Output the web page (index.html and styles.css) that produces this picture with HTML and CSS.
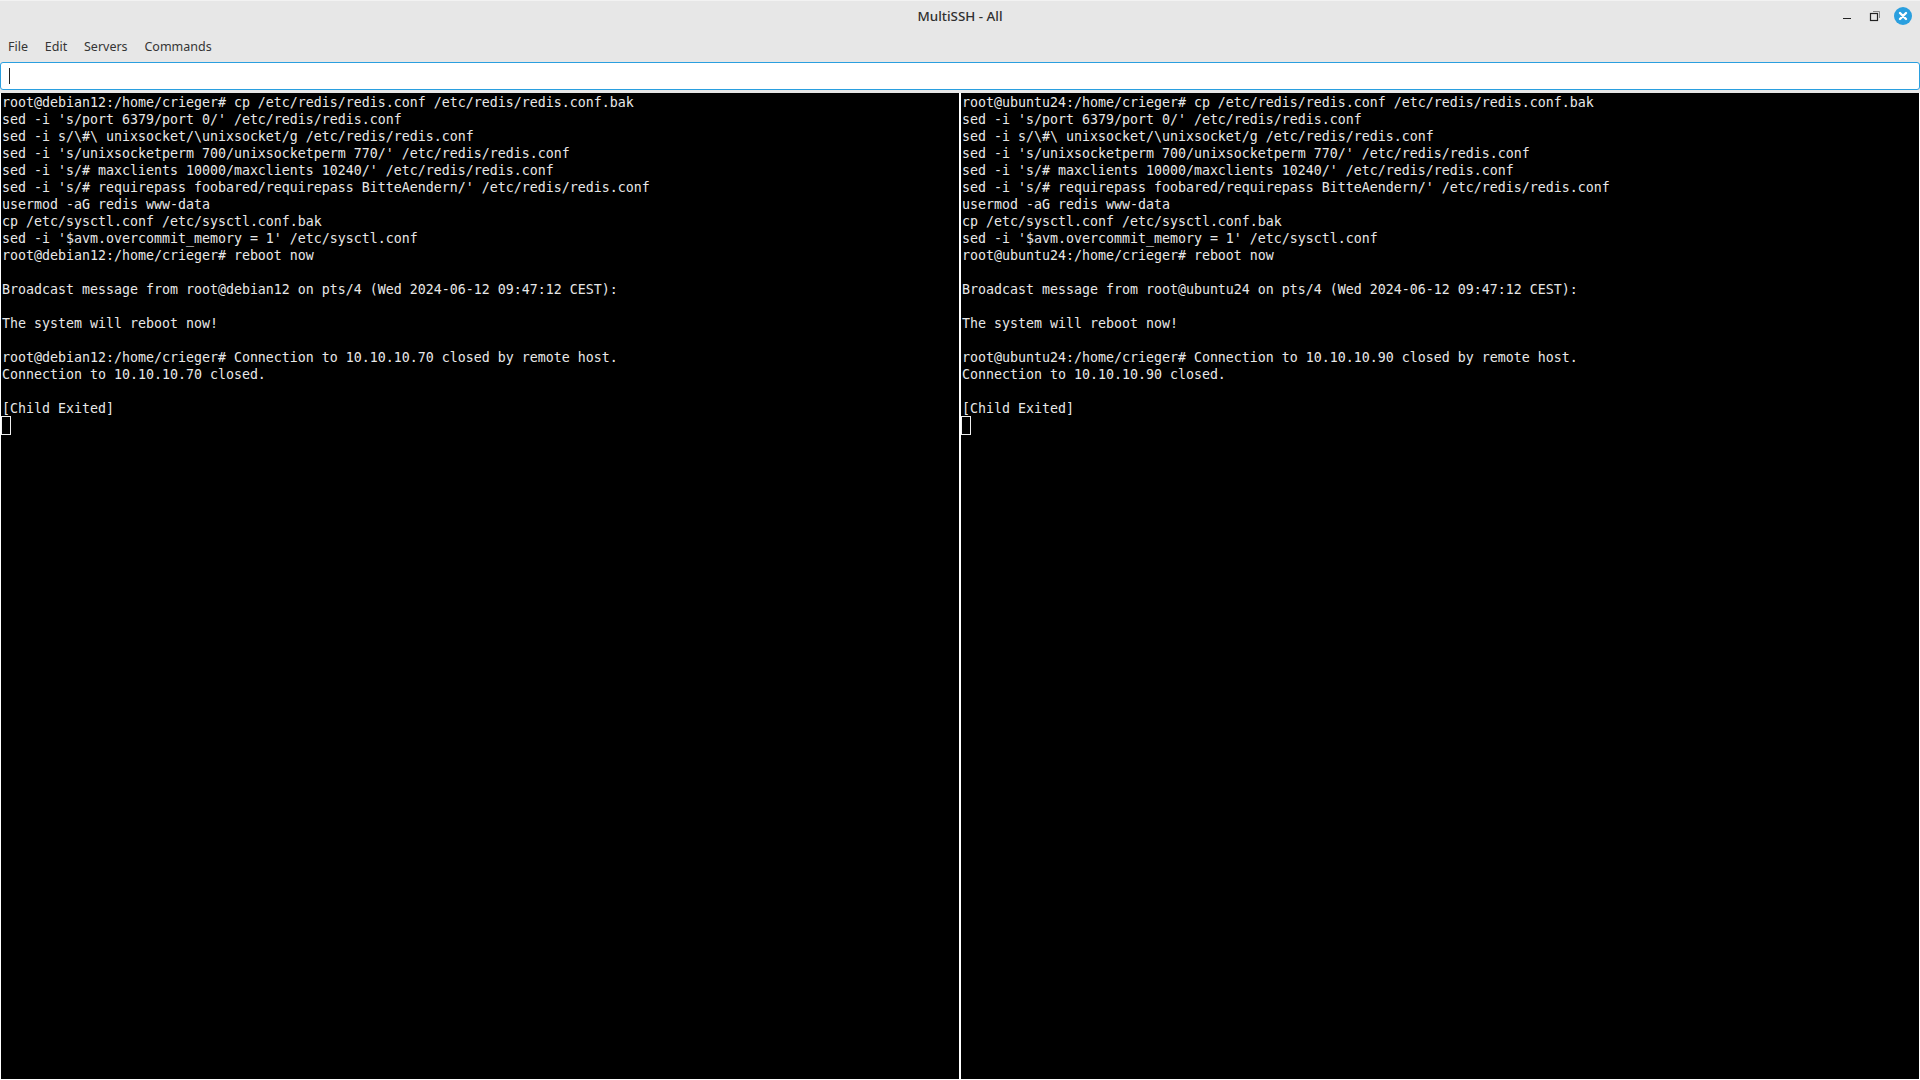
FILE: index.html
```html
<!DOCTYPE html>
<html lang="en">
<head>
<meta charset="utf-8">
<title>MultiSSH - All</title>
<link rel="stylesheet" href="styles.css">
</head>
<body>
<div class="window">
  <header class="titlebar">
    <div class="title">MultiSSH - All</div>
    <div class="controls">
      <svg class="ctl ctl-min" width="12" height="12" viewBox="0 0 12 12"><path d="M2 8.5h8" stroke="#222" stroke-width="1" fill="none"/></svg>
      <svg class="ctl" width="12" height="12" viewBox="0 0 12 12"><path d="M4 1.5h6.5V8" stroke="#888" stroke-width="1" fill="none"/><rect x="1.5" y="3.5" width="7" height="7" fill="none" stroke="#222" stroke-width="1.2"/></svg>
      <svg class="close" width="18" height="18" viewBox="0 0 18 18"><circle cx="9" cy="9" r="9" fill="#2a9fdf"/><path d="M6 6l6 6M12 6l-6 6" stroke="#fff" stroke-width="2.4" stroke-linecap="round"/></svg>
    </div>
  </header>
  <nav class="menubar">
    <span class="menu">File</span>
    <span class="menu">Edit</span>
    <span class="menu">Servers</span>
    <span class="menu">Commands</span>
  </nav>
  <div class="inputrow">
    <div class="input"><span class="caret"></span></div>
  </div>
  <main class="panes">
<section class="pane"><pre class="term">root@debian12:/home/crieger# cp /etc/redis/redis.conf /etc/redis/redis.conf.bak
sed -i 's/port 6379/port 0/' /etc/redis/redis.conf
sed -i s/\#\ unixsocket/\unixsocket/g /etc/redis/redis.conf
sed -i 's/unixsocketperm 700/unixsocketperm 770/' /etc/redis/redis.conf
sed -i 's/# maxclients 10000/maxclients 10240/' /etc/redis/redis.conf
sed -i 's/# requirepass foobared/requirepass BitteAendern/' /etc/redis/redis.conf
usermod -aG redis www-data
cp /etc/sysctl.conf /etc/sysctl.conf.bak
sed -i '$avm.overcommit_memory = 1' /etc/sysctl.conf
root@debian12:/home/crieger# reboot now

Broadcast message from root@debian12 on pts/4 (Wed 2024-06-12 09:47:12 CEST):

The system will reboot now!

root@debian12:/home/crieger# Connection to 10.10.10.70 closed by remote host.
Connection to 10.10.10.70 closed.

[Child Exited]
</pre><div class="cursor"></div></section>
<section class="pane"><pre class="term">root@ubuntu24:/home/crieger# cp /etc/redis/redis.conf /etc/redis/redis.conf.bak
sed -i 's/port 6379/port 0/' /etc/redis/redis.conf
sed -i s/\#\ unixsocket/\unixsocket/g /etc/redis/redis.conf
sed -i 's/unixsocketperm 700/unixsocketperm 770/' /etc/redis/redis.conf
sed -i 's/# maxclients 10000/maxclients 10240/' /etc/redis/redis.conf
sed -i 's/# requirepass foobared/requirepass BitteAendern/' /etc/redis/redis.conf
usermod -aG redis www-data
cp /etc/sysctl.conf /etc/sysctl.conf.bak
sed -i '$avm.overcommit_memory = 1' /etc/sysctl.conf
root@ubuntu24:/home/crieger# reboot now

Broadcast message from root@ubuntu24 on pts/4 (Wed 2024-06-12 09:47:12 CEST):

The system will reboot now!

root@ubuntu24:/home/crieger# Connection to 10.10.10.90 closed by remote host.
Connection to 10.10.10.90 closed.

[Child Exited]
</pre><div class="cursor"></div></section>
  </main>
</div>
</body>
</html>
```
FILE: styles.css
```css
html, body { margin: 0; padding: 0; height: 100%; overflow: hidden; }
.window {
  width: 1920px; height: 1080px; background: #e7e7e7;
  display: flex; flex-direction: column;
  font-family: "Noto Sans", sans-serif; color: #2f2f2f;
}
.titlebar {
  height: 32px; flex: none; position: relative;
  display: flex; align-items: center; justify-content: center;
  border-top: 1px solid #f2f2f2; box-sizing: border-box;
  padding-bottom: 2px;
}
.title { font-size: 13.4px; font-weight: 500; color: #303030; }
.controls {
  position: absolute; right: 8px; top: 6px;
  display: flex; align-items: center; gap: 13px;
}
.ctl { display: block; }
.ctl-min { margin-right: 3px; }
.close { display: block; }
.menubar {
  height: 28px; flex: none; display: flex; align-items: center;
  padding-left: 8px; gap: 16.8px; font-size: 12.5px;
  box-sizing: border-box;
}
.menu { color: #353535; }
.inputrow { flex: none; height: 33px; padding: 2px 0 0 0; box-sizing: border-box; background: #e7e7e7; }
.input {
  height: 28px; box-sizing: border-box;
  background: #fff; border: 1px solid #2a9fdf; border-radius: 3px;
  display: flex; align-items: center; padding-left: 8px;
}
.caret { width: 1px; height: 16px; background: #222; display: block; }
.panes { flex: 1; display: flex; gap: 2px; padding: 0 1px 1px 1px; background: #fff; min-height: 0; box-sizing: border-box; }
.pane { flex: 1; background: #000; min-width: 0; padding: 1px 0 0 1px; box-sizing: border-box; }
.term {
  margin: 0; color: #e8e8e8;
  font-family: "DejaVu Sans Mono", monospace; font-size: 13.29px; line-height: 17px;
}
.cursor { width: 10px; height: 19px; border: 1px solid #f0f0f0; box-sizing: border-box; margin: -1px 0 0 -1px; }
```
